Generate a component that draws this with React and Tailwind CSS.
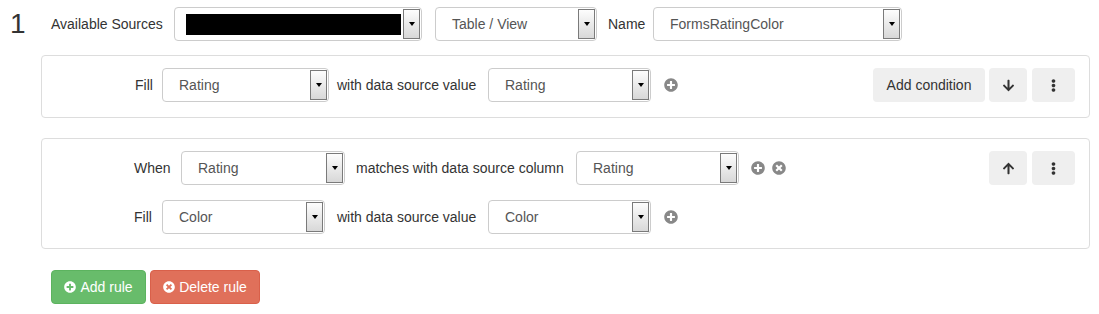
import { FaArrowDown, FaArrowUp, FaEllipsisV, FaPlusCircle, FaTimesCircle } from "react-icons/fa";

function Select({ value, width, black }) {
  return (
    <div
      className="flex h-[34px] items-stretch rounded-[4px] border border-[#ccc] bg-white shrink-0"
      style={{ width }}
    >
      <div className="flex flex-1 items-center pl-[16px] text-[14px] text-[#555] overflow-hidden">
        {black ? <div className="h-[21px] w-[215px] -ml-[5px] bg-black" /> : value}
      </div>
      <div className="my-[1px] mr-[1px] flex w-[17px] items-center justify-center border border-[#7a7a7a] bg-gradient-to-b from-[#fdfdfd] to-[#d8d8d8]">
        <div className="h-0 w-0 border-x-[3.5px] border-t-[4px] border-x-transparent border-t-black" />
      </div>
    </div>
  );
}

function GrayBtn({ children, width }) {
  return (
    <button
      className="flex h-[34px] items-center justify-center rounded-[4px] bg-[#efefef] text-[14px] text-[#333]"
      style={{ width }}
    >
      {children}
    </button>
  );
}

function Plus() {
  return <FaPlusCircle className="text-[#888] shrink-0" size={14} />;
}

export default function App() {
  return (
    <div className="w-[1099px] h-[314px] bg-white pl-[10px] pt-[7px] text-[14px] text-[#333]" style={{ fontFamily: '"Liberation Sans", Arial, sans-serif' }}>
      {/* top row */}
      <div className="flex items-center">
        <span className="w-[41px] text-[28px] leading-none text-[#333]">1</span>
        <span className="w-[123px]">Available Sources</span>
        <Select black width={248} />
        <div className="ml-[13px]"><Select value="Table / View" width={162} /></div>
        <span className="ml-[11px] w-[45px]">Name</span>
        <Select value="FormsRatingColor" width={249} />
      </div>

      {/* rule 1 */}
      <div className="mt-[14px] ml-[31px] w-[1049px] rounded-[4px] border border-[#ddd] pt-[12px] pb-[15px] pl-[93px] pr-[14px]">
        <div className="flex items-center">
          <span className="w-[27px]">Fill</span>
          <Select value="Rating" width={167} />
          <span className="ml-[8px] w-[151px]">with data source value</span>
          <Select value="Rating" width={163} />
          <div className="ml-[13px]"><Plus /></div>
          <div className="ml-auto flex gap-[4px]">
            <GrayBtn width={112}>Add condition</GrayBtn>
            <GrayBtn width={38}><FaArrowDown size={13} /></GrayBtn>
            <div className="ml-[1px]"><GrayBtn width={43}><FaEllipsisV size={13} /></GrayBtn></div>
          </div>
        </div>
      </div>

      {/* rule 2 */}
      <div className="mt-[20px] ml-[31px] w-[1049px] rounded-[4px] border border-[#ddd] pt-[12px] pb-[14px] pl-[92px] pr-[14px]">
        <div className="flex items-center">
          <span className="w-[47px]">When</span>
          <Select value="Rating" width={164} />
          <span className="ml-[11px] w-[220px]">matches with data source column</span>
          <Select value="Rating" width={163} />
          <div className="ml-[12px] flex gap-[7px]">
            <Plus />
            <FaTimesCircle className="text-[#888]" size={14} />
          </div>
          <div className="ml-auto flex gap-[5px]">
            <GrayBtn width={38}><FaArrowUp size={13} /></GrayBtn>
            <GrayBtn width={43}><FaEllipsisV size={13} /></GrayBtn>
          </div>
        </div>
        <div className="mt-[15px] flex items-center">
          <span className="w-[28px]">Fill</span>
          <Select value="Color" width={163} />
          <span className="ml-[12px] w-[151px]">with data source value</span>
          <Select value="Color" width={163} />
          <div className="ml-[13px]"><Plus /></div>
        </div>
      </div>

      {/* actions */}
      <div className="mt-[21px] ml-[41px] flex gap-[4px]">
        <button className="flex h-[34px] w-[95px] items-center justify-center gap-[4px] rounded-[4px] border border-[#5cb35f] bg-[#68bc6b] text-[14px] text-white">
          <FaPlusCircle size={12} /> Add rule
        </button>
        <button className="flex h-[34px] w-[110px] items-center justify-center gap-[4px] rounded-[4px] border border-[#d9604a] bg-[#e0705a] text-[14px] text-white">
          <FaTimesCircle size={12} /> Delete rule
        </button>
      </div>
    </div>
  );
}
